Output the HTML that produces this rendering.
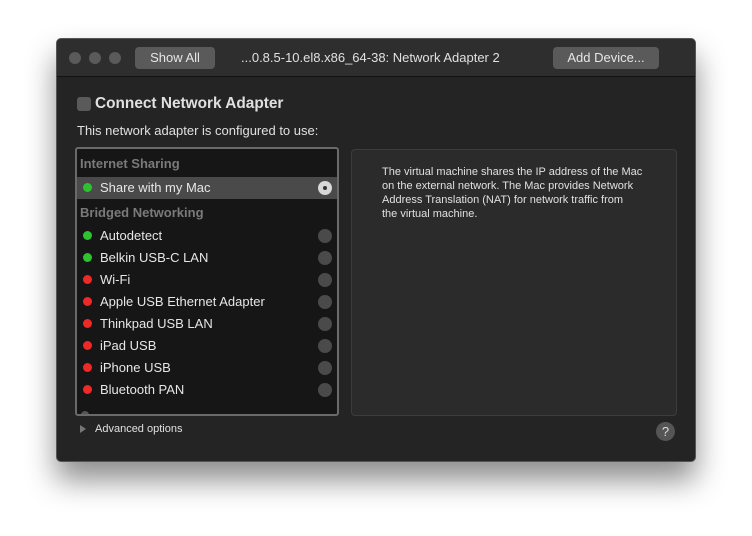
<!DOCTYPE html><html><head><style>
body{margin:0;width:752px;height:536px;background:#fff;font-family:"Liberation Sans",sans-serif;position:relative;overflow:hidden}
.win{position:absolute;left:56px;top:38px;width:640px;height:424px;background:#242424;border-radius:5px;box-shadow:0 18px 30px rgba(0,0,0,.45);border:1px solid #555;box-sizing:border-box;overflow:hidden}
.tb{position:absolute;left:0;top:0;width:100%;height:37px;background:#2e2e2e;border-bottom:1px solid #111}
.dot{position:absolute;top:13px;width:12px;height:12px;border-radius:50%;background:#5a5a5a}
.btn{position:absolute;top:8px;height:22px;background:#5a5a5a;border-radius:4px;color:#e6e6e6;font-size:13px;line-height:22px;text-align:center}
.t{position:absolute;color:#e0e0e0;white-space:nowrap}
.list{position:absolute;left:18px;top:108px;width:264px;height:269px;border:2px solid #6a6a6a;border-radius:3px;background:#161616;box-sizing:border-box;overflow:hidden}
.row{position:absolute;left:0;width:100%;height:22px;font-size:13px;color:#e6e6e6;line-height:22px}
.row .g{position:absolute;left:6px;top:6px;width:9px;height:9px;border-radius:50%}
.row span{position:absolute;left:23px}
.row .r{position:absolute;right:5px;top:4px;width:14px;height:14px;border-radius:50%;background:#4a4a4a}
.hd{position:absolute;left:3px;font-size:13px;font-weight:bold;color:#7a7a7a}
</style></head><body>
<div class="win">
<div class="tb">
<div class="dot" style="left:12px"></div><div class="dot" style="left:32px"></div><div class="dot" style="left:52px"></div>
<div class="btn" style="left:78px;width:80px">Show All</div>
<div class="t" style="left:184px;top:11px;font-size:13px">...0.8.5-10.el8.x86_64-38: Network Adapter 2</div>
<div class="btn" style="left:496px;width:106px">Add Device...</div>
</div>
<div style="position:absolute;left:20px;top:58px;width:14px;height:14px;background:#5a5a5a;border-radius:3px"></div>
<div class="t" style="left:38px;top:56px;font-size:15.4px;font-weight:bold">Connect Network Adapter</div>
<div class="t" style="left:20px;top:84px;font-size:13px">This network adapter is configured to use:</div>
<div class="list">
<div class="hd" style="top:7px">Internet Sharing</div>
<div class="row" style="top:28px;background:#4a4a4a"><div class="g" style="background:#2ec22e"></div><span>Share with my Mac</span><div class="r" style="background:#d8d8d8"><div style="position:absolute;left:5px;top:5px;width:4px;height:4px;border-radius:50%;background:#333"></div></div></div>
<div class="hd" style="top:56px">Bridged Networking</div>
<div class="row" style="top:76px"><div class="g" style="background:#2ec22e"></div><span>Autodetect</span><div class="r"></div></div>
<div class="row" style="top:98px"><div class="g" style="background:#2ec22e"></div><span>Belkin USB-C LAN</span><div class="r"></div></div>
<div class="row" style="top:120px"><div class="g" style="background:#f02828"></div><span>Wi-Fi</span><div class="r"></div></div>
<div class="row" style="top:142px"><div class="g" style="background:#f02828"></div><span>Apple USB Ethernet Adapter</span><div class="r"></div></div>
<div class="row" style="top:164px"><div class="g" style="background:#f02828"></div><span>Thinkpad USB LAN</span><div class="r"></div></div>
<div class="row" style="top:186px"><div class="g" style="background:#f02828"></div><span>iPad USB</span><div class="r"></div></div>
<div class="row" style="top:208px"><div class="g" style="background:#f02828"></div><span>iPhone USB</span><div class="r"></div></div>
<div class="row" style="top:230px"><div class="g" style="background:#f02828"></div><span>Bluetooth PAN</span><div class="r"></div></div>
<div style="position:absolute;left:4px;top:262px;width:8px;height:8px;border-radius:50%;background:#555"></div>
</div>
<div style="position:absolute;left:294px;top:110px;width:324px;height:265px;background:#2b2b2b;border:1px solid #3c3c3c;border-radius:4px"></div>
<div class="t" style="left:325px;top:126px;font-size:11px;line-height:14px;color:#e0e0e0">The virtual machine shares the IP address of the Mac<br>on the external network. The Mac provides Network<br>Address Translation (NAT) for network traffic from<br>the virtual machine.</div>
<div style="position:absolute;left:23px;top:386px;width:0;height:0;border-left:6px solid #777;border-top:4px solid transparent;border-bottom:4px solid transparent"></div>
<div class="t" style="left:38px;top:384px;font-size:11px">Advanced options</div>
<div style="position:absolute;left:599px;top:383px;width:19px;height:19px;border-radius:50%;background:#555;color:#ddd;font-size:13px;text-align:center;line-height:19px">?</div>
</div>
</body></html>
